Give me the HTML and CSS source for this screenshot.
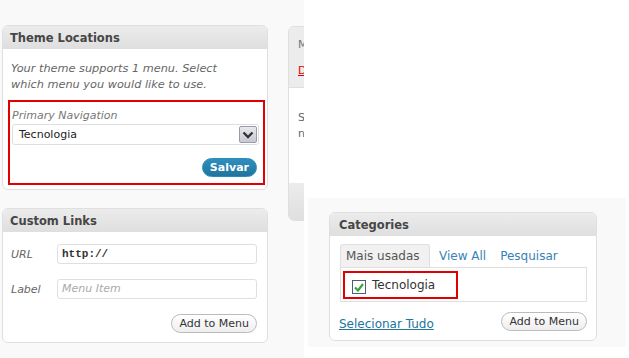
FILE: index.html
```
<!DOCTYPE html>
<html lang="pt">
<head>
    <meta charset="UTF-8">
    <title>Menus</title>
    <link rel="stylesheet" href="styles.css">
</head>
<body>
<div class="page">

    <div class="shot-left">
        <div class="col-main">
            <section class="box">
                <h3 class="box-head">Theme Locations</h3>
                <div class="box-body theme-body">
                    <p class="howto">Your theme supports 1 menu. Select which menu you would like to use.</p>
                    <div class="mark mark-theme">
                        <p class="field-label">Primary Navigation</p>
                        <div class="select">
                            <span>Tecnologia</span>
                            <span class="select-arrow">
                                <svg width="12" height="8" viewBox="0 0 12 8"><path d="M1.5 1.5 L6 6 L10.5 1.5" fill="none" stroke="#333" stroke-width="2.4"/></svg>
                            </span>
                        </div>
                        <div class="row-end">
                            <button class="btn-primary">Salvar</button>
                        </div>
                    </div>
                </div>
            </section>

            <section class="box">
                <h3 class="box-head">Custom Links</h3>
                <div class="box-body links-body">
                    <div class="link-row">
                        <label class="link-label">URL</label>
                        <div class="input input-url">http://</div>
                    </div>
                    <div class="link-row">
                        <label class="link-label">Label</label>
                        <div class="input input-empty">Menu Item</div>
                    </div>
                    <div class="row-end">
                        <button class="btn">Add to Menu</button>
                    </div>
                </div>
            </section>
        </div>

        <div class="col-edit">
            <section class="menu-edit">
                <div class="menu-edit-head">
                    <p class="menu-name">Menu Name</p>
                    <a class="delete-link">Delete Menu</a>
                </div>
                <div class="menu-edit-body">
                    <p>Select items at left to add them to your<br>new custom menu.</p>
                </div>
                <div class="menu-edit-foot"></div>
            </section>
        </div>
    </div>

    <div class="right">
        <div class="right-top"></div>
        <div class="right-bottom">
            <div class="shot-right">
                <section class="box cat-box">
                    <h3 class="box-head">Categories</h3>
                    <div class="box-body cat-body">
                        <div class="tabs">
                            <span class="tab tab-active">Mais usadas</span>
                            <a class="tab">View All</a>
                            <a class="tab">Pesquisar</a>
                        </div>
                        <div class="tab-panel">
                            <div class="mark mark-cat">
                                <span class="checkbox">
                                    <svg width="10" height="9" viewBox="0 0 10 9"><path d="M1 4.5 L4 7.5 L9 1" fill="none" stroke="#3aa33a" stroke-width="2.2"/></svg>
                                </span>
                                <span>Tecnologia</span>
                            </div>
                        </div>
                        <div class="cat-foot">
                            <a class="select-all">Selecionar Tudo</a>
                            <button class="btn">Add to Menu</button>
                        </div>
                    </div>
                </section>
            </div>
        </div>
    </div>

</div>
</body>
</html>
```
FILE: styles.css
```
* {
    margin: 0;
    padding: 0;
    box-sizing: border-box;
}

body {
    background: #fff;
    font-family: "DejaVu Sans", Verdana, sans-serif;
    font-size: 11px;
    color: #333;
}

.page {
    display: flex;
    width: 629px;
    height: 358px;
    overflow: hidden;
}

/* left screenshot */
.shot-left {
    width: 304px;
    height: 358px;
    background: #f9f9f9;
    display: flex;
    gap: 20px;
    padding: 25px 0 0 2px;
    overflow: hidden;
}

.col-main {
    width: 266px;
    flex-shrink: 0;
    display: flex;
    flex-direction: column;
    gap: 18px;
}

.box {
    background: #fff;
    border: 1px solid #dfdfdf;
    border-radius: 6px;
    overflow: hidden;
}

.box-head {
    height: 23px;
    line-height: 24px;
    padding-left: 7px;
    font-size: 11.5px;
    font-weight: bold;
    color: #464646;
    background: linear-gradient(#ececec, #dfdfdf);
    border-bottom: 1px solid #dfdfdf;
}

.theme-body {
    padding: 12px 2px 4px 8px;
}

.howto {
    width: 225px;
    font-style: italic;
    color: #666;
    line-height: 16px;
    font-size: 11.3px;
}

.mark {
    border: 2px solid #e00000;
}

.mark-theme {
    margin: 7px 0 0 -3px;
    width: 257px;
    padding: 6px 4px 6px 2px;
}

.field-label {
    font-style: italic;
    color: #777;
    line-height: 16px;
}

.select {
    height: 21px;
    border: 1px solid #dfdfdf;
    border-radius: 3px;
    display: flex;
    align-items: center;
    justify-content: space-between;
    padding: 0 1px 0 6px;
    color: #222;
}

.select-arrow {
    width: 18px;
    height: 17px;
    border: 1px solid #9a9aa8;
    border-radius: 2px;
    background: linear-gradient(#e8e8ee, #c8c8d2);
    display: flex;
    align-items: center;
    justify-content: center;
}

.row-end {
    display: flex;
    justify-content: flex-end;
}

.mark-theme .row-end {
    margin-top: 13px;
    padding-right: 2px;
}

.btn-primary {
    height: 19px;
    padding: 0 7px;
    border: 1px solid #298cba;
    border-radius: 10px;
    background: linear-gradient(#2e8ebf, #21759b);
    color: #fff;
    font-family: inherit;
    font-size: 11px;
    font-weight: bold;
}

.btn {
    height: 19px;
    padding: 0 7px;
    border: 1px solid #bbb;
    border-radius: 10px;
    background: linear-gradient(#fff, #eee);
    color: #333;
    font-family: inherit;
    font-size: 11px;
}

.links-body {
    padding: 12px 10px 9px 8px;
}

.link-row {
    display: flex;
    align-items: center;
    margin-bottom: 15px;
}

.link-label {
    width: 46px;
    font-style: italic;
    color: #666;
}

.input {
    width: 200px;
    height: 20px;
    border: 1px solid #dfdfdf;
    border-radius: 3px;
    padding-left: 4px;
    line-height: 18px;
}

.input-url {
    font-family: "Liberation Mono", monospace;
    font-size: 11px;
    font-weight: bold;
    color: #333;
}

.input-empty {
    font-style: italic;
    color: #aaa;
}

/* menu editor, cut off by the screenshot edge */
.col-edit {
    width: 300px;
    flex-shrink: 0;
    padding-top: 1px;
}

.menu-edit {
    border: 1px solid #dfdfdf;
    border-radius: 6px;
    overflow: hidden;
    height: 195px;
    display: flex;
    flex-direction: column;
    color: #666;
}

.menu-edit-head {
    height: 61px;
    background: #ececec;
    padding: 10px 0 0 9px;
    border-bottom: 1px solid #dfdfdf;
}

.menu-name {
    line-height: 15px;
    color: #777;
}

.delete-link {
    display: inline-block;
    margin-top: 12px;
    color: #e00000;
    text-decoration: underline;
}

.menu-edit-body {
    height: 95px;
    background: #fff;
    padding: 22px 0 0 9px;
    line-height: 16px;
}

.menu-edit-foot {
    flex: 1;
    background: linear-gradient(#ececec, #dfdfdf);
}

/* right side */
.right {
    flex: 1;
    display: flex;
    flex-direction: column;
}

.right-top {
    height: 198px;
    background: #fff;
}

.right-bottom {
    padding-left: 4px;
}

.shot-right {
    width: 318px;
    height: 149px;
    background: #f9f9f9;
    padding: 14px 0 0 21px;
}

.cat-box {
    width: 268px;
    height: 129px;
}

.cat-box .box-head {
    padding-left: 9px;
}

.cat-body {
    padding: 8px 9px 0 10px;
}

.tabs {
    display: flex;
    align-items: flex-end;
    height: 23px;
}

.tab {
    padding: 0 9px 0 5px;
    line-height: 22px;
    color: #3982b5;
    font-size: 12px;
}

.tab-active {
    width: 90px;
    height: 23px;
    color: #555;
    background: #f1f1f1;
    border: 1px solid #dfdfdf;
    border-bottom: none;
    border-radius: 3px 3px 0 0;
    margin-right: 4px;
}

.tab-panel {
    height: 35px;
    border: 1px solid #dfdfdf;
    background: #fff;
    padding: 3px 0 0 2px;
}

.mark-cat {
    width: 115px;
    height: 28px;
    display: flex;
    align-items: center;
    gap: 6px;
    padding-left: 7px;
    font-size: 12px;
    color: #333;
}

.checkbox {
    width: 14px;
    height: 14px;
    border: 1px solid #4a5f74;
    background: #fff;
    display: flex;
    align-items: center;
    justify-content: center;
    margin-top: 4px;
}

.cat-foot {
    display: flex;
    justify-content: space-between;
    align-items: center;
    margin: 10px 0 0 -1px;
}

.select-all {
    color: #21759b;
    text-decoration: underline;
    font-size: 12px;
    margin-top: 5px;
}
```
